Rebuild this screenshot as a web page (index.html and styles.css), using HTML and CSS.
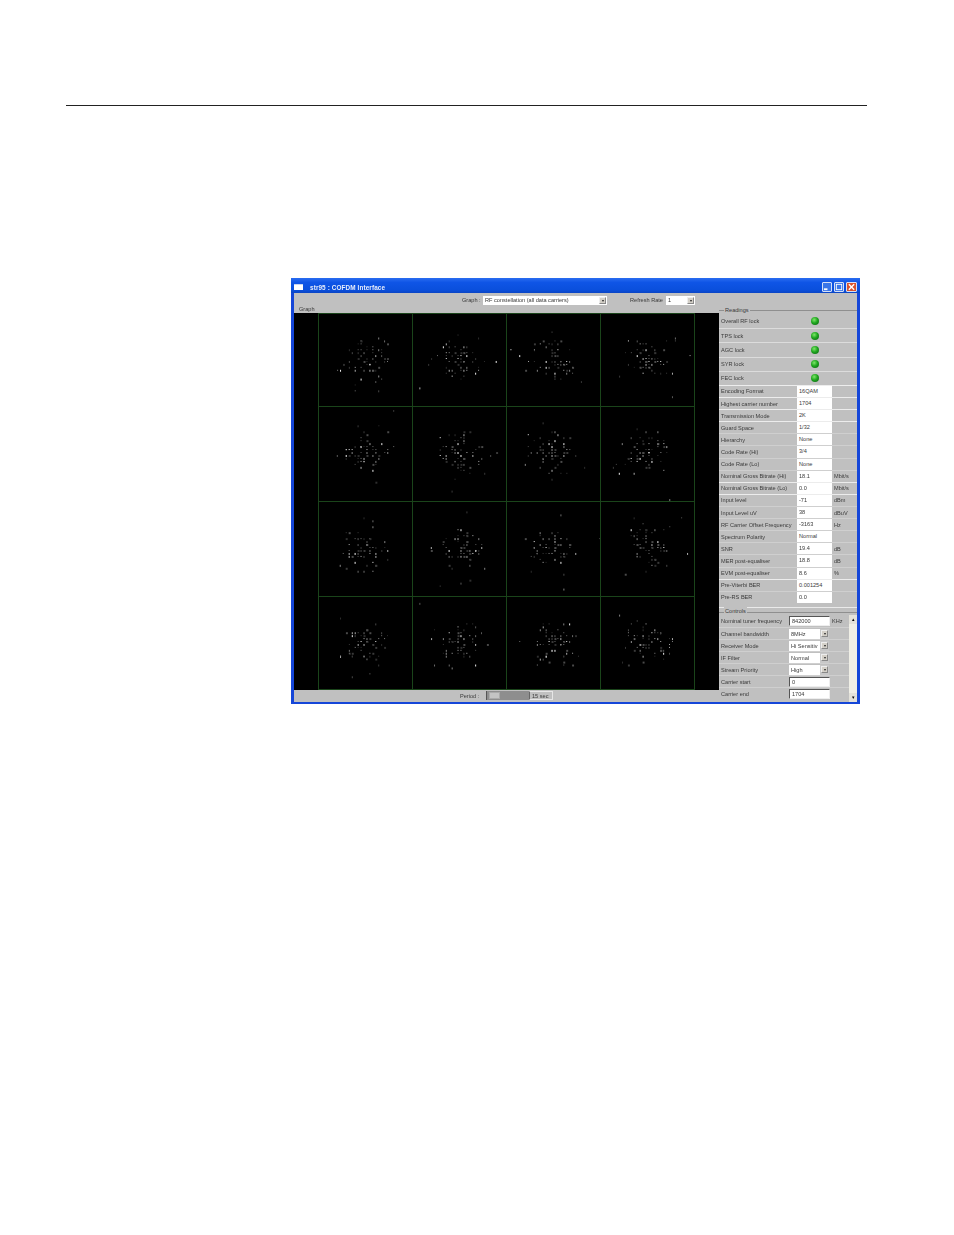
FILE: index.html
```html
<!DOCTYPE html>
<html lang="en">
<head>
<meta charset="utf-8">
<title>str95 : COFDM Interface</title>
<link rel="stylesheet" href="styles.css">
</head>
<body>
<div class="rule"></div>
<div class="window">
  <div class="titlebar">
    <span class="app-icon"></span>
    <span class="title">str95 : COFDM Interface</span>
    <span class="winbtn"><svg viewBox="0 0 9 9"><rect x="1" y="6" width="4" height="2" fill="#fff"/></svg></span>
    <span class="winbtn"><svg viewBox="0 0 9 9"><rect x="1.5" y="1.5" width="6" height="6" fill="none" stroke="#fff"/></svg></span>
    <span class="winbtn close"><svg viewBox="0 0 9 9"><path d="M1.5 1.5l6 6M7.5 1.5l-6 6" stroke="#fff" stroke-width="1.6"/></svg></span>
  </div>
  <div class="client">
    <div class="toolbar">
      <span class="tb-label">Graph :</span>
      <span class="combo combo-graph"><span class="combo-text">RF constellation (all data carriers)</span><span class="arrow">▾</span></span>
      <span class="tb-label tb-rate">Refresh Rate</span>
      <span class="combo combo-rate"><span class="combo-text">1</span><span class="arrow">▾</span></span>
    </div>
    <div class="main">
      <div class="left">
        <div class="graph-label">Graph</div>
        <div class="plot"><div class="plot-grid" id="plot"></div></div>
        <div class="period">
          <span class="period-label">Period :</span>
          <span class="slider"><span class="thumb"></span></span>
          <span class="period-value">15 sec</span>
        </div>
      </div>
      <div class="panel">
        <div class="group-head"><span>Readings</span></div>
        <div class="leds">
          <div class="led-row"><span>Overall RF lock</span><i class="led"></i></div>
          <div class="led-row"><span>TPS lock</span><i class="led"></i></div>
          <div class="led-row"><span>AGC lock</span><i class="led"></i></div>
          <div class="led-row"><span>SYR lock</span><i class="led"></i></div>
          <div class="led-row"><span>FEC lock</span><i class="led"></i></div>
        </div>
        <div class="readings">
          <div class="r"><span>Encoding Format</span><b>16QAM</b><em></em></div>
          <div class="r"><span>Highest carrier number</span><b>1704</b><em></em></div>
          <div class="r"><span>Transmission Mode</span><b>2K</b><em></em></div>
          <div class="r"><span>Guard Space</span><b>1/32</b><em></em></div>
          <div class="r"><span>Hierarchy</span><b>None</b><em></em></div>
          <div class="r"><span>Code Rate (Hi)</span><b>3/4</b><em></em></div>
          <div class="r"><span>Code Rate (Lo)</span><b>None</b><em></em></div>
          <div class="r"><span>Nominal Gross Bitrate (Hi)</span><b>18.1</b><em>Mbit/s</em></div>
          <div class="r"><span>Nominal Gross Bitrate (Lo)</span><b>0.0</b><em>Mbit/s</em></div>
          <div class="r"><span>Input level</span><b>-71</b><em>dBm</em></div>
          <div class="r"><span>Input Level uV</span><b>38</b><em>dBuV</em></div>
          <div class="r"><span>RF Carrier Offset Frequency</span><b>-3163</b><em>Hz</em></div>
          <div class="r"><span>Spectrum Polarity</span><b>Normal</b><em></em></div>
          <div class="r"><span>SNR</span><b>19.4</b><em>dB</em></div>
          <div class="r"><span>MER post-equaliser</span><b>18.8</b><em>dB</em></div>
          <div class="r"><span>EVM post-equaliser</span><b>8.6</b><em>%</em></div>
          <div class="r"><span>Pre-Viterbi BER</span><b>0.001254</b><em></em></div>
          <div class="r"><span>Pre-RS BER</span><b>0.0</b><em></em></div>
        </div>
        <div class="group-head controls-head"><span>Controls</span></div>
        <div class="controls">
          <div class="control-rows">
            <div class="c"><span>Nominal tuner frequency</span><b class="field">842000</b><em>KHz</em></div>
            <div class="c"><span>Channel bandwidth</span><b class="drop">8MHz<i class="arrow">▾</i></b></div>
            <div class="c"><span>Receiver Mode</span><b class="drop">Hi Sensitiv<i class="arrow">▾</i></b></div>
            <div class="c"><span>IF Filter</span><b class="drop">Normal<i class="arrow">▾</i></b></div>
            <div class="c"><span>Stream Priority</span><b class="drop">High<i class="arrow">▾</i></b></div>
            <div class="c"><span>Carrier start</span><b class="field">0</b></div>
            <div class="c"><span>Carrier end</span><b class="field">1704</b></div>
          </div>
          <div class="scrollbar">
            <span class="sb-btn">▴</span>
            <span class="sb-track"></span>
            <span class="sb-btn">▾</span>
          </div>
        </div>
      </div>
    </div>
  </div>
</div>
<script src="script.js"></script>
</body>
</html>
```
FILE: styles.css
```css
* { box-sizing: border-box; }
html, body { margin: 0; padding: 0; background: #fff; }
body { height: 1235px; overflow: hidden; font-family: "Liberation Sans", Arial, sans-serif; }

.rule { height: 1px; margin: 105px 87px 0 66px; background: #222; }

.window {
  width: 569px;
  height: 426px;
  margin: 172px 0 0 291px;
  display: flex;
  flex-direction: column;
  background: #1546d8;
  padding: 0 3px 2px;
  border-radius: 3px 3px 0 0;
  font-size: 5.6px;
  color: #3a3a3a;
}

.titlebar {
  height: 15px;
  margin: 0 -3px;
  padding: 3px 3px 0 3px;
  display: flex;
  align-items: center;
  background: linear-gradient(#2a6cf0 0%, #0f55e6 30%, #0a4fdc 80%, #0b45c4 100%);
  color: #fff;
}
.app-icon { width: 9px; height: 6px; background: #fff; border-top: 1px solid #c8d4f0; margin-right: 7px; }
.title { flex: 1; font-size: 6.4px; font-weight: bold; letter-spacing: .1px; filter: blur(.25px); color: #e8eefc; }
.winbtn {
  width: 10px; height: 10px; margin-right: 2px;
  border: 1px solid #d6e0f6; border-radius: 1px;
  background: #3a76e8; display: block;
}
.winbtn svg { display: block; width: 8px; height: 8px; }
.winbtn.close { width: 11px; background: #d8532c; margin-right: 0; }
.winbtn.close svg { width: 9px; }

.client { flex: 1; min-height: 0; display: flex; flex-direction: column; background: #c0c0c0; }

.toolbar { height: 13px; display: flex; align-items: center; padding: 1px 0 0 168px; filter: blur(.2px); }
.tb-label { width: 21px; }
.tb-rate { width: 36px; margin-left: 23px; }
.combo { height: 9px; background: #fff; display: flex; align-items: center; justify-content: space-between; padding-left: 2px; }
.combo-graph { width: 124px; }
.combo-rate { width: 29px; }
.arrow {
  width: 7px; height: 7px; background: #d4d0c8; margin-right: 1px; font-size: 4px; line-height: 6px; text-align: center;
  color: #222; font-style: normal; border: 1px solid #eee; border-right-color: #888; border-bottom-color: #888; display: block;
}

.main { flex: 1; min-height: 0; display: flex; }

.left { width: 425px; display: flex; flex-direction: column; }
.graph-label { height: 7px; padding: 0 0 0 5px; filter: blur(.2px); line-height: 6px; }
.plot { height: 377px; background: #000; padding-left: 24px; }
.plot-grid {
  width: 377px; height: 377px;
  display: grid;
  grid-template-columns: repeat(4, 1fr);
  grid-template-rows: 93px 95px 95px 93px;
  border-bottom: 1px solid #1a441a;
  border-right: 1px solid #1a441a;
}
.cell { border-left: 1px solid #1a441a; border-top: 1px solid #1a441a; min-width: 0; min-height: 0; }
.cell svg { display: block; width: 100%; height: 100%; }

.period { height: 11px; display: flex; align-items: center; padding-left: 166px; filter: blur(.2px); }
.period-label { width: 26px; }
.slider { width: 43px; height: 9px; background: #8e8e8e; padding: 1px 0 1px 2px; border-left: 1px solid #555; display: block; }
.thumb { display: block; width: 11px; height: 7px; background: #c4c4c4; border: 1px solid #aaa; }
.period-value { width: 24px; height: 9px; padding-left: 2px; line-height: 8px; border: 1px solid #e6e6e6; border-left-color: #666; }

.panel { width: 138px; display: flex; flex-direction: column; filter: blur(.22px); }

.group-head { height: 8px; position: relative; display: flex; align-items: center; padding-left: 5px; }
.group-head::before { content: ""; position: absolute; left: 0; right: 0; top: 4px; height: 1px; background: #8f8f8f; }
.group-head span { position: relative; background: #c0c0c0; padding: 0 1px; line-height: 8px; }

.leds { display: grid; grid-auto-rows: 14.2px; }
.led-row { display: flex; align-items: center; justify-content: space-between; padding: 0 38px 0 2px; border-top: 1px solid #dcdcdc; }
.led-row:first-child { border-top: 0; }
.led {
  width: 8px; height: 8px; border-radius: 50%; display: block;
  background: radial-gradient(circle at 40% 35%, #7fe66a 0%, #1fa71f 45%, #0a5c12 100%);
}

.readings { display: grid; grid-auto-rows: 12.12px; }
.r { display: grid; grid-template-columns: 78px 35px 1fr; align-items: center; border-top: 1px solid #cfcfcf; }
.r:first-child { border-top-color: #ededed; }
.r:nth-child(2), .r:nth-child(3), .r:nth-child(4), .r:nth-child(9), .r:nth-child(10), .r:nth-child(17) { border-top-color: #ececec; }
.r span { padding-left: 2px; white-space: nowrap; overflow: hidden; }
.r b { background: #fff; font-weight: normal; height: 100%; padding-left: 2px; line-height: 10px; }
.r em { font-style: normal; padding-left: 2px; white-space: nowrap; }

.controls-head { margin-top: 4px; border-top: 1px solid #eaeaea; }
.controls { flex: 1; min-height: 0; display: flex; }
.control-rows { width: 130px; display: grid; grid-auto-rows: 12.1px; }
.c { display: grid; grid-template-columns: 70px 41px 1fr; align-items: center; border-top: 1px solid #cfcfcf; }
.c:first-child { border-top: 0; }
.c > span { padding-left: 2px; white-space: nowrap; }
.c b { font-weight: normal; height: 10px; line-height: 8px; padding-left: 2px; display: flex; justify-content: space-between; align-items: center; white-space: nowrap; }
.c b.field { background: #fff; border: 1px solid #eee; border-left-color: #555; border-top-color: #555; }
.c b.drop { width: 40px; background: linear-gradient(#fff,#fff) left / 31px 100% no-repeat #c8c8c8; }
.c em { font-style: normal; padding-left: 2px; }
.scrollbar { width: 8px; display: flex; flex-direction: column; }
.sb-btn { height: 9px; background: #e4e2da; color: #000; font-size: 5px; line-height: 9px; text-align: center; display: block; }
.sb-track { flex: 1; background: #f0efe6; display: block; }
```
FILE: script.js
```js
(function () {
  var seed = 95;
  function rnd() {
    seed = (seed * 1664525 + 1013904223) % 4294967296;
    return seed / 4294967296;
  }
  function gauss() {
    return (rnd() + rnd() + rnd() + rnd() - 2) / 0.577;
  }
  var ns = "http://www.w3.org/2000/svg";
  var dim = ["#2e2e2e", "#3a3a3a", "#4a4a4a", "#5a5a5a", "#6e6e6e", "#858585"];
  var plot = document.getElementById("plot");
  for (var i = 0; i < 16; i++) {
    var cell = document.createElement("div");
    cell.className = "cell";
    var svg = document.createElementNS(ns, "svg");
    svg.setAttribute("viewBox", "0 0 94 94");
    for (var k = 0; k < 62; k++) {
      var spread = k < 54 ? 0.85 : 1.7;
      var x = Math.round((47 + gauss() * 13 * spread) / 3) * 3;
      var y = Math.round((46 + gauss() * 12 * spread) / 3) * 3;
      var r = document.createElementNS(ns, "rect");
      var big = rnd() < 0.15;
      var pick = rnd();
      r.setAttribute("x", x);
      r.setAttribute("y", y);
      r.setAttribute("width", big ? 2 : 1);
      r.setAttribute("height", big || rnd() < 0.5 ? 2 : 1);
      r.setAttribute("fill", big ? dim[Math.floor(rnd() * 3)] : pick < 0.1 ? "#f4f4f4" : pick < 0.22 ? "#b0b0b0" : dim[Math.floor(rnd() * dim.length)]);
      svg.appendChild(r);
    }
    cell.appendChild(svg);
    plot.appendChild(cell);
  }
})();
```
